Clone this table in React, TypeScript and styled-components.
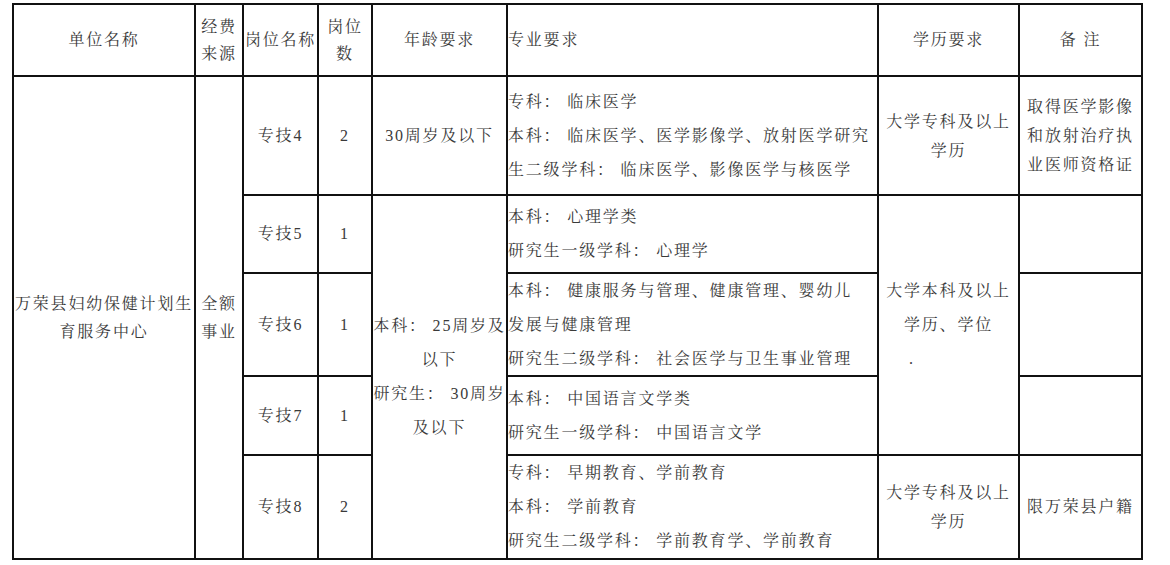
import React from 'react';
import styled, {createGlobalStyle} from 'styled-components';

const GlobalStyle = createGlobalStyle`
  body {
    margin: 0;
    background: #fff;
  }
`;

type CellProps = {
    $col: number
    $row: number
    $span?: number
    $align?: 'left' | 'center'
    $lh?: number
}

type PostRow = {
    post: string
    count: string
    majors: string[]
}

const posts: PostRow[] = [
    {
        post: '专技4',
        count: '2',
        majors: ['专科： 临床医学', '本科： 临床医学、医学影像学、放射医学研究', '生二级学科： 临床医学、影像医学与核医学'],
    },
    {
        post: '专技5',
        count: '1',
        majors: ['本科： 心理学类', '研究生一级学科： 心理学'],
    },
    {
        post: '专技6',
        count: '1',
        majors: ['本科： 健康服务与管理、健康管理、婴幼儿', '发展与健康管理', '研究生二级学科： 社会医学与卫生事业管理'],
    },
    {
        post: '专技7',
        count: '1',
        majors: ['本科： 中国语言文学类', '研究生一级学科： 中国语言文学'],
    },
    {
        post: '专技8',
        count: '2',
        majors: ['专科： 早期教育、学前教育', '本科： 学前教育', '研究生二级学科： 学前教育学、学前教育'],
    },
];

const lines = (items: string[]) => items.map((t, i) => <Line key={i}>{t}</Line>);

const App = () => {
    return (
        <Sheet>
            <GlobalStyle/>
            <Grid>
                <Cell $col={1} $row={1}>{lines(['单位名称'])}</Cell>
                <Cell $col={2} $row={1} $lh={27}>{lines(['经费', '来源'])}</Cell>
                <Cell $col={3} $row={1}>{lines(['岗位名称'])}</Cell>
                <Cell $col={4} $row={1} $lh={27}>{lines(['岗位', '数'])}</Cell>
                <Cell $col={5} $row={1}>{lines(['年龄要求'])}</Cell>
                <Cell $col={6} $row={1} $align="left">{lines(['专业要求'])}</Cell>
                <Cell $col={7} $row={1}>{lines(['学历要求'])}</Cell>
                <Cell $col={8} $row={1}>{lines(['备 注'])}</Cell>

                <Cell $col={1} $row={2} $span={5}>{lines(['万荣县妇幼保健计划生', '育服务中心'])}</Cell>
                <Cell $col={2} $row={2} $span={5}>{lines(['全额', '事业'])}</Cell>

                {posts.map((p, i) => (
                    <React.Fragment key={p.post}>
                        <Cell $col={3} $row={i + 2}>{lines([p.post])}</Cell>
                        <Cell $col={4} $row={i + 2}>{lines([p.count])}</Cell>
                        <Cell $col={6} $row={i + 2} $align="left" $lh={34}>{lines(p.majors)}</Cell>
                    </React.Fragment>
                ))}

                <Cell $col={5} $row={2}>{lines(['30周岁及以下'])}</Cell>
                <Cell $col={5} $row={3} $span={4} $lh={34}>
                    {lines(['本科： 25周岁及', '以下', '研究生： 30周岁', '及以下'])}
                </Cell>

                <Cell $col={7} $row={2} $lh={29}>{lines(['大学专科及以上', '学历'])}</Cell>
                <Cell $col={7} $row={3} $span={3} $lh={34}>
                    {lines(['大学本科及以上', '学历、学位'])}
                    <Dot>.</Dot>
                </Cell>
                <Cell $col={7} $row={6} $lh={29}>{lines(['大学专科及以上', '学历'])}</Cell>

                <Cell $col={8} $row={2} $lh={29}>{lines(['取得医学影像', '和放射治疗执', '业医师资格证'])}</Cell>
                <Cell $col={8} $row={3}/>
                <Cell $col={8} $row={4}/>
                <Cell $col={8} $row={5}/>
                <Cell $col={8} $row={6}>{lines(['限万荣县户籍'])}</Cell>
            </Grid>
        </Sheet>
    )
};

const Sheet = styled.div`
  padding: 3px 0 0 12px;
  font-family: "Liberation Serif", "Noto Serif CJK SC", "Noto Sans CJK SC", serif;
  font-size: 16px;
  letter-spacing: 1.8px;
  color: #3a3a3a;
`;

const Grid = styled.div`
  display: grid;
  grid-template-columns: 182px 48px 75px 54px 135px 371px 141px 123px;
  grid-template-rows: 72px 119px 78px 103px 79px 104px;
  width: max-content;
  border-left: 2px solid #111;
  border-top: 2px solid #111;
`;

const Cell = styled.div<CellProps>`
  grid-column: ${p => p.$col};
  grid-row: ${p => p.$row} / span ${p => p.$span ?? 1};
  display: flex;
  flex-direction: column;
  justify-content: center;
  text-align: ${p => p.$align ?? 'center'};
  line-height: ${p => p.$lh ?? 28}px;
  border-right: 2px solid #111;
  border-bottom: 2px solid #111;
  overflow: hidden;
`;

const Line = styled.span`
  display: block;
  white-space: nowrap;
`;

const Dot = styled.span`
  display: block;
  text-align: left;
  padding-left: 30px;
`;

export default App;
